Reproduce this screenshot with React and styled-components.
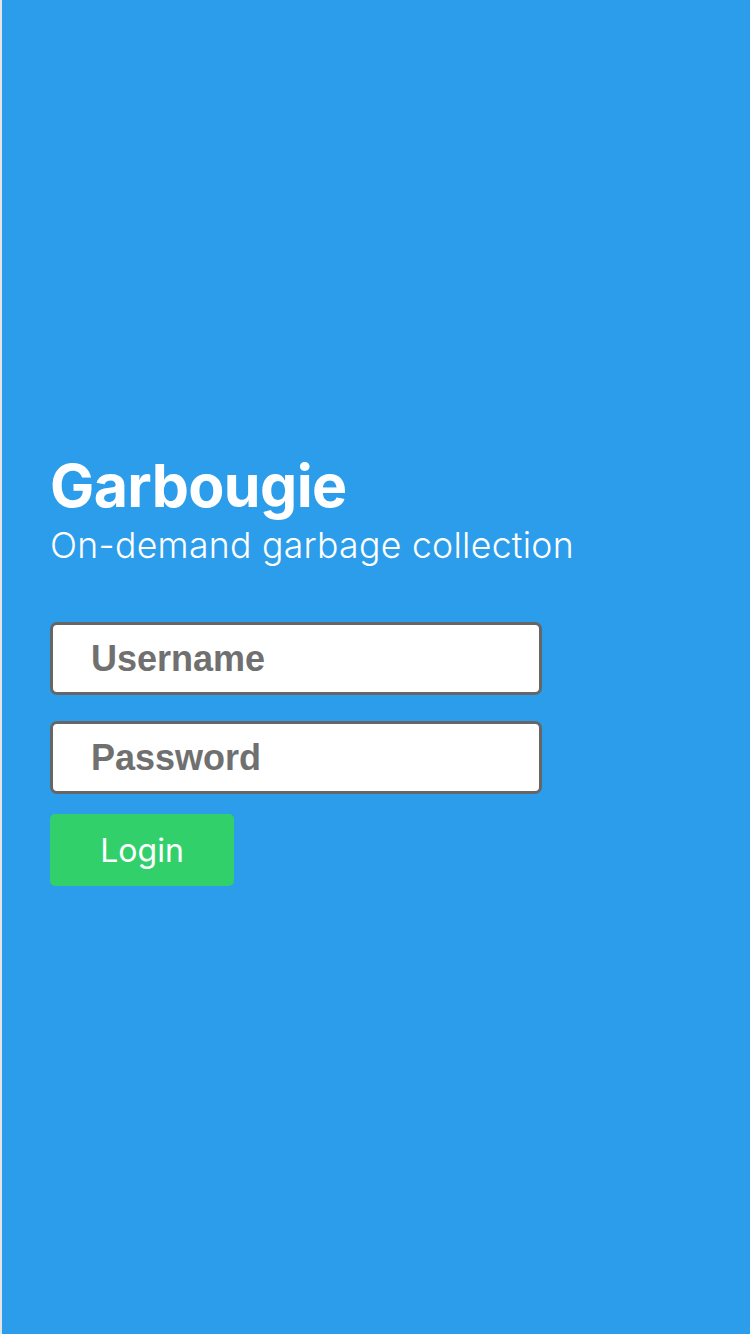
import React from "react";
import styled, { createGlobalStyle } from "styled-components";

const Global = createGlobalStyle`
  html, body { margin: 0; padding: 0; }
  body { background: #2B9DEB; font-family: Inter, "Noto Sans", sans-serif; }
`;

const Screen = styled.div`
  width: 750px;
  height: 1334px;
  box-sizing: border-box;
  border-left: 2px solid #e4e4e4;
  background: #2B9DEB;
  display: flex;
  flex-direction: column;
  padding: 452px 0 0 48px;
`;

const Title = styled.h1`
  margin: 0;
  font-family: Inter, "Noto Sans", sans-serif;
  font-weight: 700;
  font-size: 59px;
  line-height: 68px;
  color: #ffffff;
  letter-spacing: -0.6px;
`;

const Subtitle = styled.p`
  margin: 4px 0 0;
  font-family: Inter, "Noto Sans", sans-serif;
  font-weight: 300;
  font-size: 35.6px;
  line-height: 44px;
  letter-spacing: 0.3px;
  color: #ffffff;
`;

const Form = styled.form`
  display: flex;
  flex-direction: column;
  align-items: flex-start;
  gap: 26px;
  margin-top: 54px;
`;

const Field = styled.input`
  box-sizing: border-box;
  width: 492px;
  height: 73px;
  border: 3px solid #666666;
  border-radius: 7px;
  background: #ffffff;
  padding: 0 0 0 38px;
  font-family: "Liberation Sans", Arial, sans-serif;
  font-weight: 700;
  font-size: 36px;
  color: #333;
  outline: none;
  &::placeholder { color: #707070; opacity: 1; }
`;

const Button = styled.button`
  box-sizing: border-box;
  width: 184px;
  height: 72px;
  margin-top: -6px;
  border: none;
  border-radius: 5px;
  background: #32D06A;
  color: #ffffff;
  font-family: Inter, "Noto Sans", sans-serif;
  font-weight: 400;
  font-size: 32px;
  cursor: pointer;
`;

export default function App() {
  return (
    <>
      <Global />
      <Screen>
        <Title>Garbougie</Title>
        <Subtitle>On-demand garbage collection</Subtitle>
        <Form onSubmit={(e) => e.preventDefault()}>
          <Field placeholder="Username" />
          <Field type="password" placeholder="Password" />
          <Button type="submit">Login</Button>
        </Form>
      </Screen>
    </>
  );
}
